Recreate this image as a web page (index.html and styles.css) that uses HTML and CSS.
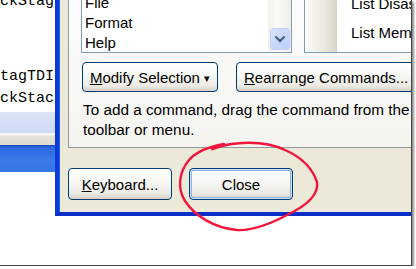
FILE: index.html
```html
<!DOCTYPE html>
<html>
<head>
<meta charset="utf-8">
<link rel="stylesheet" href="styles.css">
</head>
<body>
<div class="shot">
  <div class="editor">
    <div class="code">
      <div class="ln l1">ckStag</div>
      <div class="ln l4">tagTDI</div>
      <div class="ln l5">ckStac</div>
    </div>
    <div class="sel"></div>
    <div class="sep"></div>
    <div class="bar"></div>
  </div>
  <div class="dialog">
    <div class="page">
      <div class="lists">
        <div class="list list-left">
          <div class="items">
            <div class="item">File</div>
            <div class="item">Format</div>
            <div class="item">Help</div>
          </div>
          <div class="vscroll">
            <div class="arrow">
              <svg width="12" height="8" viewBox="0 0 12 8"><path d="M1.5 1.5 L6 6 L10.5 1.5" fill="none" stroke="#4d6185" stroke-width="2.4"/></svg>
            </div>
          </div>
        </div>
        <div class="list list-right">
          <div class="iconcol"></div>
          <div class="items items-right">
            <div class="item">List Disassembly</div>
            <div class="item">List Memory</div>
          </div>
        </div>
      </div>
      <div class="btnrow">
        <button class="btn btn-modify"><u>M</u>odify Selection <span class="caret">&#9662;</span></button>
        <button class="btn btn-rearrange"><u>R</u>earrange Commands...</button>
      </div>
      <p class="hint">To add a command, drag the command from the category list to a<br>toolbar or menu.</p>
    </div>
    <div class="footer">
      <button class="btn btn-key"><u>K</u>eyboard...</button>
      <button class="btn btn-close">Close</button>
    </div>
  </div>
  <svg class="annot" width="411" height="265" viewBox="0 0 411 265">
    <path d="M 212 149 C 234 141, 264 140, 285 150 C 301 157, 312 167, 317 182 C 319 195, 306 206, 287 215 C 270 224, 253 231, 237 230 C 214 228, 195 216, 185 201 C 177 188, 179 172, 189 160 C 196 152, 207 147, 224 144" fill="none" stroke="#f4143c" stroke-width="2.4" stroke-linecap="round" stroke-linejoin="round"/>
  </svg>
</div>
</body>
</html>
```

FILE: styles.css
```css
html, body {
  margin: 0;
  padding: 0;
  background: #ffffff;
}

.shot {
  position: relative;
  width: 411px;
  height: 265px;
  overflow: hidden;
  display: flex;
  align-items: flex-start;
  background: #ffffff;
  border-right: 1px solid #444;
  border-bottom: 1px solid #444;
  box-shadow: 2px 2px 2px rgba(0,0,0,0.45);
  font-family: "Liberation Sans", Arial, sans-serif;
  font-size: 15px;
  color: #000;
}

/* editor behind the dialog */
.editor {
  flex: none;
  width: 55px;
  display: flex;
  flex-direction: column;
  overflow: hidden;
}
.code {
  font-family: "Liberation Mono", "Courier New", monospace;
  font-size: 15px;
  line-height: 22px;
  white-space: nowrap;
  height: 112px;
}
.ln.l1 { margin-top: -9px; }
.ln.l4 { margin-top: 53px; }
.ln.l5 { margin-top: 0; }
.sel {
  height: 21px;
  background: linear-gradient(#dbe4f7, #cfdbf5);
}
.sep {
  height: 12px;
  background: linear-gradient(#f4f4f2 0, #f4f4f2 2px, #e4e2da 3px, #dcd9cf 100%);
}
.bar {
  height: 27px;
  background: linear-gradient(#1b4fc9 0, #1b4fc9 1px, #2d68e0 2px, #3b7ae8 60%, #3574e6 100%);
}

/* dialog */
.dialog {
  flex: none;
  width: 600px;
  height: 212px;
  background: #ece9d8;
  border-left: 4px solid #0a3ad8;
  border-bottom: 4px solid #0a2ec8;
  box-shadow: inset 1px 0 0 #1c5cf0;
  padding-left: 9px;
  display: flex;
  flex-direction: column;
}
.page {
  height: 147px;
  border-left: 1px solid #919b9c;
  border-bottom: 1px solid #919b9c;
  background: linear-gradient(#fcfcfe, #f5f4ef);
  padding-left: 12px;
  display: flex;
  flex-direction: column;
}
.lists {
  display: flex;
  gap: 12px;
  height: 53px;
}
.list {
  flex: none;
  height: 52px;
  border: 1px solid #7f9db9;
  border-top: none;
  background: #fff;
  display: flex;
  overflow: hidden;
}
.list-left { width: 209px; }
.list-right { width: 300px; }
.items {
  flex: 1;
  margin-top: -7px;
  padding-left: 3px;
}
.item {
  line-height: 20px;
  white-space: nowrap;
}
.items-right {
  margin-top: -11px;
  padding-left: 14px;
}
.items-right .item { line-height: 29px; }
.vscroll {
  flex: none;
  width: 23px;
  background: linear-gradient(90deg, #f3f1ec, #fbfaf8 40%, #eeede5);
  display: flex;
  flex-direction: column;
  justify-content: flex-end;
  align-items: center;
  padding-bottom: 2px;
}
.arrow {
  width: 20px;
  height: 22px;
  border-radius: 3px;
  background: linear-gradient(135deg, #d6e2fd, #bccff9);
  border: 1px solid #c4d3f6;
  box-sizing: border-box;
  display: flex;
  align-items: center;
  justify-content: center;
}
.iconcol {
  flex: none;
  width: 32px;
  background: linear-gradient(90deg, #fbfaf6, #ebe9e0 60%, #d7d4c6);
}

.btn {
  font-family: "Liberation Sans", Arial, sans-serif;
  font-size: 15px;
  color: #000;
  border: 1px solid #003c74;
  border-radius: 4px;
  background: linear-gradient(#ffffff 0%, #f5f5f1 50%, #ecebe5 80%, #d8d3c8 100%);
  box-shadow: inset 0 -1px 0 #d6d0c5;
  padding: 0;
  box-sizing: border-box;
  white-space: nowrap;
  overflow: hidden;
}
.btn u { text-decoration: underline; }

.btnrow {
  display: flex;
  gap: 18px;
  margin-top: 9px;
  margin-left: 1px;
}
.btn-modify { width: 136px; height: 30px; }
.btn-rearrange { width: 200px; height: 30px; text-align: left; padding-left: 7px; }
.caret { font-size: 11px; position: relative; top: -1px; }

.hint {
  margin: 8px 0 0 2px;
  font-size: 15.3px;
  line-height: 20px;
  white-space: nowrap;
}

.footer {
  display: flex;
  gap: 17px;
  padding-top: 20px;
}
.btn-key { width: 104px; height: 32px; }
.btn-close {
  width: 104px;
  height: 32px;
  box-shadow: inset 0 0 0 1px #cfe0fb, inset 0 0 0 2px #8cb0ec;
}

.annot {
  position: absolute;
  left: 0;
  top: 0;
  pointer-events: none;
}
```
